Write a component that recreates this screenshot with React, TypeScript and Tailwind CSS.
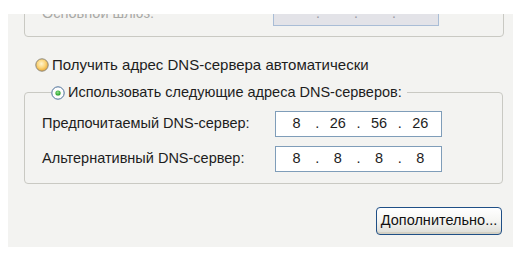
export default function App() {
  const font = "font-['Liberation_Sans',Arial,sans-serif]";

  return (
    <div className={`w-[527px] h-[267px] bg-white overflow-hidden ${font}`}>
      <div className="ml-[8px] mt-[14px] w-[505px] h-[233px] bg-[#f3f3f1] flex flex-col overflow-hidden">
        {/* upper group box, cut off by the top edge */}
        <div className="-mt-[21px] ml-[16px] w-[480px] h-[44px] shrink-0 border border-[#c9c9c3] rounded-[4px] pt-[7px]">
          <div className="flex items-center h-[25px]">
            <span className="ml-[17px] w-[231px] text-[14.5px] text-[#a9a9a6]">Основной шлюз:</span>
            <div className="w-[166px] h-[25px] border border-[#a9bdd6] bg-[#e3e3e8] flex items-center justify-around px-[25px] text-[#9a9aa4] text-[14px]">
              <span>.</span>
              <span>.</span>
              <span>.</span>
            </div>
          </div>
        </div>

        <label className="mt-[19px] ml-[27px] flex items-center gap-[3px] h-[18px] text-[15px] text-[#1d1d1d]">
          <RadioHover />
          <span>Получить адрес DNS-сервера автоматически</span>
        </label>

        <fieldset className="mt-[8px] ml-[16px] w-[479px] h-[102px] border border-[#c9c9c3] rounded-[4px] px-[17px]">
          <legend className="ml-[9px] pr-[5px] flex items-center gap-[3px] text-[14.5px] text-[#1d1d1d]">
            <RadioChecked />
            <span>Использовать следующие адреса DNS-серверов:</span>
          </legend>
          <div className="mt-[7px] flex flex-col gap-[9px]">
            <IpRow label="Предпочитаемый DNS-сервер:" parts={["8", "26", "56", "26"]} />
            <IpRow label="Альтернативный DNS-сервер:" parts={["8", "8", "8", "8"]} />
          </div>
        </fieldset>

        <div className="flex justify-end pr-[11px] mt-[23px]">
          <button className="w-[126px] h-[28px] rounded-[4px] border border-[#1f4f86] bg-gradient-to-b from-white via-[#f5f5f2] to-[#dcdcd6] text-[14.5px] text-[#111] leading-none pb-[1px] shadow-[inset_0_-2px_0_#d3d0c4]">
            Дополнительно...
          </button>
        </div>
      </div>
    </div>
  );
}

function IpRow({ label, parts }: { label: string; parts: string[] }) {
  return (
    <div className="flex items-center">
      <span className="w-[233px] text-[14.5px] text-[#1d1d1d]">{label}</span>
      <div className="w-[167px] h-[26px] border border-[#7f9db9] bg-white flex items-center text-[14.5px] text-[#1d1d1d]">
        {parts.map((p, i) => (
          <div key={i} className="flex-1 flex items-center justify-center relative">
            <span>{p}</span>
            {i < 3 && <span className="absolute -right-[2px]">.</span>}
          </div>
        ))}
      </div>
    </div>
  );
}

function RadioHover() {
  return (
    <svg width="14" height="14" viewBox="0 0 14 14" className="shrink-0">
      <defs>
        <radialGradient id="rh" cx="45%" cy="40%" r="60%">
          <stop offset="0%" stopColor="#fff4cf" />
          <stop offset="55%" stopColor="#fbd57a" />
          <stop offset="100%" stopColor="#e9a631" />
        </radialGradient>
      </defs>
      <circle cx="7" cy="7" r="6.2" fill="url(#rh)" stroke="#8d8a80" strokeWidth="1" />
    </svg>
  );
}

function RadioChecked() {
  return (
    <svg width="14" height="14" viewBox="0 0 14 14" className="shrink-0">
      <defs>
        <radialGradient id="rc" cx="45%" cy="40%" r="60%">
          <stop offset="0%" stopColor="#8fe08f" />
          <stop offset="100%" stopColor="#1c9a1c" />
        </radialGradient>
      </defs>
      <circle cx="7" cy="7" r="6.2" fill="#fdfdfd" stroke="#4b6f98" strokeWidth="1" />
      <circle cx="7" cy="7" r="2.6" fill="url(#rc)" />
    </svg>
  );
}
